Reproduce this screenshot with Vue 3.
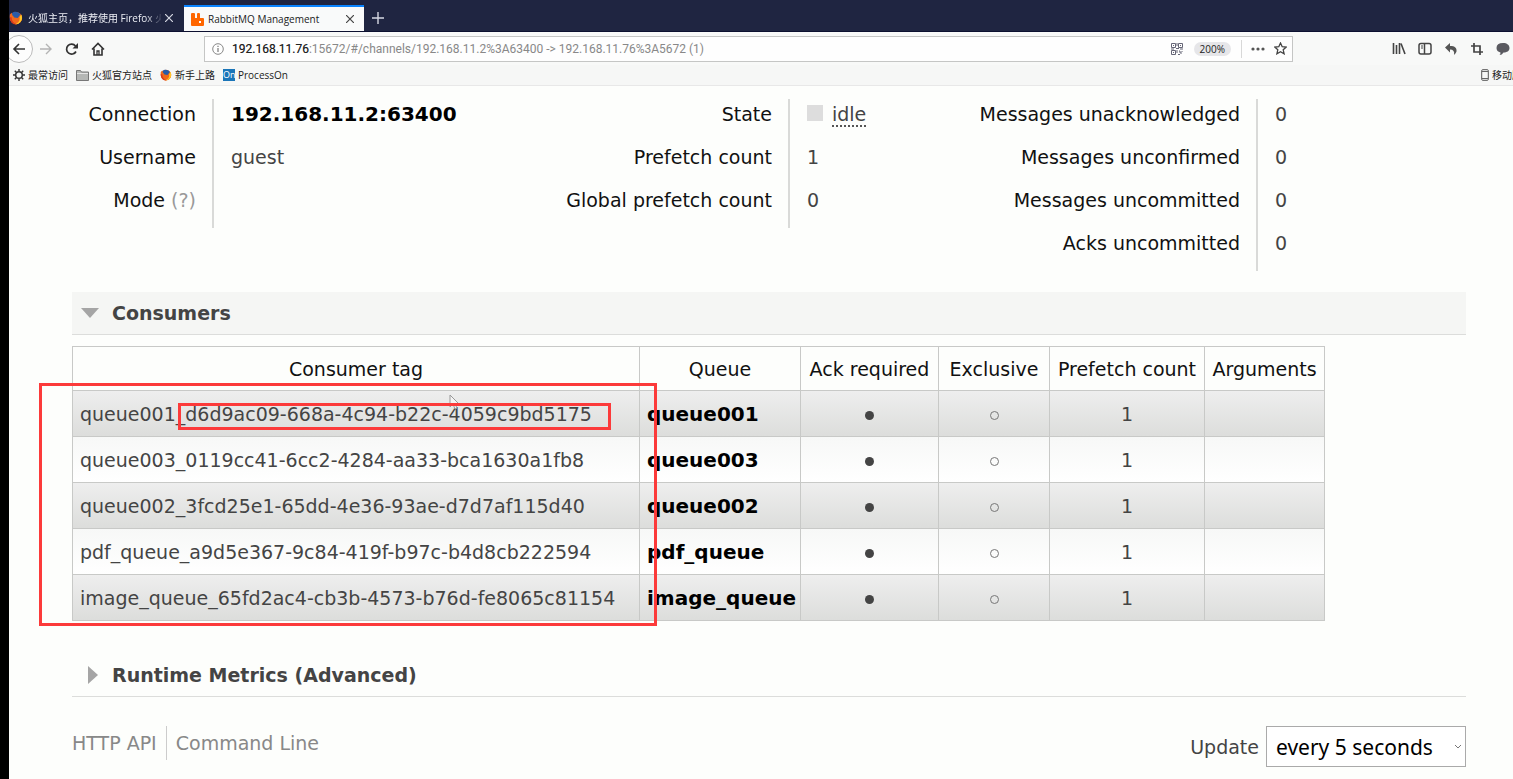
<script setup>
import { ref } from 'vue'

const address = ref('192.168.11.76:15672/#/channels/192.168.11.2%3A63400 -> 192.168.11.76%3A5672 (1)')
const interval = ref('every 5 seconds')

const consumers = [
  { tag: 'queue001_d6d9ac09-668a-4c94-b22c-4059c9bd5175', queue: 'queue001' },
  { tag: 'queue003_0119cc41-6cc2-4284-aa33-bca1630a1fb8', queue: 'queue003' },
  { tag: 'queue002_3fcd25e1-65dd-4e36-93ae-d7d7af115d40', queue: 'queue002' },
  { tag: 'pdf_queue_a9d5e367-9c84-419f-b97c-b4d8cb222594', queue: 'pdf_queue' },
  { tag: 'image_queue_65fd2ac4-cb3b-4573-b76d-fe8065c81154', queue: 'image_queue' },
]

const counters = ['Messages unacknowledged', 'Messages unconfirmed', 'Messages uncommitted', 'Acks uncommitted']
</script>

<template>
  <div class="window">
    <svg class="defs" aria-hidden="true">
      <symbol id="fox" viewBox="0 0 16 16">
        <circle cx="8" cy="8" r="7" fill="#f0681c" />
        <path d="M3 3C5 0 11 0 13 4L10 8 4 7z" fill="#2a5ca8" />
        <path d="M1 4C0 12 5 16 9 15 14 14 16 9 14 4 14 8 12 11 8 11 5 11 4 9 6 7L4 5 3 2z" fill="#f26a1b" />
        <path d="M14 4C17 10 12 16 7 15 11 14 13 11 12 7z" fill="#ffc928" />
        <path d="M1 7C1 13 5 16 9 15 5 14 3 11 3 7z" fill="#d93a1c" />
      </symbol>
    </svg>

    <header class="chrome">
      <div class="tabs">
        <div class="tab">
          <svg class="i14"><use href="#fox" /></svg>
          <span class="tab-title fade">火狐主页，推荐使用 Firefox 火</span>
          <button class="plain" aria-label="Close first tab">
            <svg width="8" height="8" viewBox="0 0 8 8"><path d="M0 0 8 8M8 0 0 8" stroke="#d5d8e2" stroke-width="1.2" /></svg>
          </button>
        </div>
        <div class="tab active">
          <svg width="13" height="13" viewBox="0 0 13 13"><path fill="#f60" d="M1 0h2q1 0 1 1v4h2V1q0-1 1-1h1q1 0 1 1v4h3q1 0 1 1v6q0 1-1 1H1q-1 0-1-1V1q0-1 1-1z" /><rect x="8" y="8" width="2" height="2" fill="#fff" /></svg>
          <span class="tab-title">RabbitMQ Management</span>
          <button class="plain" aria-label="Close RabbitMQ tab">
            <svg width="8" height="8" viewBox="0 0 8 8"><path d="M0 0 8 8M8 0 0 8" stroke="#444" stroke-width="1.2" /></svg>
          </button>
        </div>
        <button class="plain new-tab" aria-label="New tab">
          <svg width="12" height="12" viewBox="0 0 12 12"><path d="M6 0v12M0 6h12" stroke="#d5d8e2" stroke-width="1.4" /></svg>
        </button>
      </div>

      <div class="nav">
        <div class="nav-buttons">
          <button class="plain back" aria-label="Back">
            <svg width="14" height="14" viewBox="0 0 14 14" fill="none" stroke="#333" stroke-width="1.6"><path d="M13 7H2M7 2 2 7l5 5" /></svg>
          </button>
          <button class="plain" aria-label="Forward">
            <svg width="14" height="14" viewBox="0 0 14 14" fill="none" stroke="#b4b4b4" stroke-width="1.4"><path d="M1 7h11M7 2l5 5-5 5" /></svg>
          </button>
          <button class="plain" aria-label="Reload">
            <svg width="14" height="14" viewBox="0 0 14 14" fill="none" stroke="#333" stroke-width="1.7"><path d="M11 9.500A5 5 0 1 1 10.500 4" /><path d="M13 1v5.500H7.500z" fill="#333" stroke="none" /></svg>
          </button>
          <button class="plain" aria-label="Home">
            <svg width="14" height="14" viewBox="0 0 14 14" fill="none" stroke="#333" stroke-width="1.6"><path d="M1 7.500 7 1.500l6 6M3 6.500V13h8V6.500" /><path d="M6 13V9h2v4" stroke-width="1.300" /></svg>
          </button>
        </div>

        <div class="urlbar">
          <svg width="12" height="12" viewBox="0 0 12 12"><circle cx="6" cy="6" r="5.300" fill="none" stroke="#888" /><path d="M6 5v4M6 2.800v1.200" stroke="#777" stroke-width="1.200" /></svg>
          <div class="url-field">
            <input v-model="address" class="url" aria-label="Address" />
            <span class="host" aria-hidden="true">192.168.11.76</span>
          </div>
          <svg width="12" height="12" viewBox="0 0 12 12" fill="none" stroke="#667"><path d="M.5 .5h4v4h-4zM7.500 .5h4v4h-4zM.5 7.500h4v4h-4zM2 2.500h1M9 2.500h1M2 9.500h1M6 0v3M5 5.500h3M0 6h3M9 6h3M6 7v3M8 8h1v2h2M7 11.500h2M11 8v1" /></svg>
          <button class="plain zoom">200%</button>
          <span class="sep"></span>
          <svg width="14" height="4" viewBox="0 0 14 4" fill="#555"><circle cx="2" cy="2" r="1.600" /><circle cx="7" cy="2" r="1.600" /><circle cx="12" cy="2" r="1.600" /></svg>
          <svg width="13" height="13" viewBox="0 0 13 13"><path d="m6.500 1 1.700 3.700 4 .4-3 2.700.9 4-3.600-2.100L2.900 11.800l.9-4-3-2.700 4-.4z" fill="none" stroke="#444" stroke-width="1.300" /></svg>
        </div>

        <div class="tools">
          <svg width="14" height="14" viewBox="0 0 14 14" stroke="#444" stroke-width="1.600"><path d="M1.500 1v11M4.500 3v9M7.500 1v11M9 1.500l4 10.500" /></svg>
          <svg width="14" height="14" viewBox="0 0 14 14" fill="none" stroke="#444" stroke-width="1.500"><rect x="1" y="1.500" width="12" height="10.500" rx="2" /><path d="M6.500 2v10" /><path d="M3 4h2M3 6h2" stroke-width="1" /></svg>
          <svg width="14" height="14" viewBox="0 0 14 14"><path d="M1 5.500 6 1v3c5 0 7 2 6.500 5.500Q12 11 10 13 11 7.500 6 7.500v3z" fill="#555" /></svg>
          <svg width="14" height="14" viewBox="0 0 14 14" fill="none" stroke="#444" stroke-width="1.700"><path d="M4 1v9h9M1 4h9v9" /></svg>
          <svg width="14" height="14" viewBox="0 0 14 14"><path d="M7 1c4 0 6.500 2 6.500 5S11 10.500 7.500 10.500Q6 13 3.500 13 4.500 12 4.500 10.500 .5 9.500 .5 6 .5 1 7 1z" fill="#5a5a60" /></svg>
        </div>
      </div>

      <div class="bookmarks">
        <a href="#"><svg width="12" height="12" viewBox="0 0 12 12" fill="none" stroke="#333"><circle cx="6" cy="6" r="3.300" stroke-width="1.500" /><path d="M6 0v2M6 10v2M0 6h2M10 6h2M1.800 1.800l1.400 1.400M8.800 8.800l1.400 1.400M10.200 1.800 8.800 3.200M3.200 8.800l-1.400 1.400" stroke-width="1.400" /></svg>最常访问</a>
        <a href="#"><svg width="13" height="12" viewBox="0 0 13 12"><path d="M.5 1.500h4l1 1.500h7v8.500H.5z" fill="#b5b7b5" stroke="#777" /><path d="M1 4.500h11" stroke="#e4e4e4" /></svg>火狐官方站点</a>
        <a href="#"><svg class="i12"><use href="#fox" /></svg>新手上路</a>
        <a href="#"><span class="on">On</span>ProcessOn</a>
        <a href="#" class="mobile"><svg width="8" height="12" viewBox="0 0 8 12"><rect x=".7" y=".7" width="6.600" height="10.600" rx="1" fill="none" stroke="#555" /><path d="M1 2.500h6M1 9.500h6" stroke="#666" /></svg>移动版</a>
      </div>
    </header>

    <main>
      <section class="facts">
        <table class="first">
          <tbody>
            <tr><th scope="row">Connection</th><td><a href="#">192.168.11.2:63400</a></td></tr>
            <tr><th scope="row">Username</th><td>guest</td></tr>
            <tr><th scope="row">Mode <span class="help">(?)</span></th><td></td></tr>
          </tbody>
        </table>
        <table class="second">
          <tbody>
            <tr><th scope="row">State</th><td><span class="status"></span><span class="idle">idle</span></td></tr>
            <tr><th scope="row">Prefetch count</th><td>1</td></tr>
            <tr><th scope="row">Global prefetch count</th><td>0</td></tr>
          </tbody>
        </table>
        <table class="third">
          <tbody>
            <tr v-for="c in counters" :key="c"><th scope="row">{{ c }}</th><td>0</td></tr>
          </tbody>
        </table>
      </section>

      <h2 class="open">
        <button class="plain"><svg width="18" height="18" viewBox="0 0 18 18"><path d="M0 4h18l-9 10z" fill="#a5a5a5" /></svg>Consumers</button>
      </h2>

      <div class="consumers">
        <table class="list">
          <colgroup><col class="c-tag" /><col class="c-queue" /><col class="c-ack" /><col class="c-excl" /><col class="c-pref" /><col class="c-args" /></colgroup>
          <thead>
            <tr><th>Consumer tag</th><th>Queue</th><th>Ack required</th><th>Exclusive</th><th>Prefetch count</th><th>Arguments</th></tr>
          </thead>
          <tbody>
            <tr v-for="c in consumers" :key="c.tag">
              <td>{{ c.tag }}</td>
              <td><a href="#">{{ c.queue }}</a></td>
              <td class="mid"><span class="dot"></span></td>
              <td class="mid"><span class="ring"></span></td>
              <td class="mid">1</td>
              <td></td>
            </tr>
          </tbody>
        </table>
        <svg class="pointer" width="12" height="16" viewBox="0 0 12 16"><path d="M1 1v12l3-3 2 5 2-1-2-4h4z" fill="#f4f4f4" stroke="#999" /></svg>
        <div class="mark all"></div>
        <div class="mark id"></div>
      </div>

      <h2>
        <button class="plain"><svg width="18" height="18" viewBox="0 0 18 18"><path d="M7 0v18l10-9z" fill="#a5a5a5" /></svg>Runtime Metrics (Advanced)</button>
      </h2>

      <footer>
        <nav class="links"><a href="#">HTTP API</a><a href="#">Command Line</a></nav>
        <div class="update">
          <label for="interval">Update</label>
          <div class="select">
            <select id="interval" v-model="interval">
              <option>every 5 seconds</option>
              <option>every 30 seconds</option>
            </select>
            <svg width="6" height="4" viewBox="0 0 6 4"><path d="m0 0 3 3 3-3" fill="none" stroke="#777" /></svg>
          </div>
        </div>
      </footer>
    </main>
  </div>
</template>

<style>
body { margin: 0; background: #fdfefc; }
</style>

<style scoped>
* { box-sizing: border-box; }
.window {
  min-height: 100vh;
  border-left: 9px solid #000;
  background: #fdfefc;
  color: #444;
  font: 19px/24px "DejaVu Sans", Verdana, sans-serif;
  overflow: hidden;
}
.defs { display: none; }
a { color: inherit; text-decoration: none; }
svg { flex: none; display: block; }
.plain { border: 0; background: none; padding: 0; margin: 0; font: inherit; color: inherit; display: flex; align-items: center; }
.i14 { width: 14px; height: 14px; }
.i12 { width: 12px; height: 12px; }

.chrome { font: 10px/16px "Open Sans", "Noto Sans CJK SC", sans-serif; color: #222; }
.tabs { display: flex; align-items: flex-end; height: 32px; background: #1f2541; border-bottom: 1px solid #0c1030; }
.tab { display: flex; align-items: center; gap: 4px; width: 175px; height: 26px; padding: 0 11px 0 0; color: #eceef4; }
.tab-title { flex: 1; white-space: nowrap; overflow: hidden; }
.fade { padding-left: 1px; mask-image: linear-gradient(90deg, #000 88%, transparent 102%); }
.active { width: 180px; padding: 0 10px 0 7px; background: #f9fafa; color: #222; border-top: 2px solid #0a84ff; }
.new-tab { height: 26px; padding-left: 8px; }

.nav { display: flex; align-items: center; height: 33px; background: #f8f9f8; }
.nav-buttons { display: flex; align-items: center; gap: 12px; width: 195px; margin-left: -4px; }
.back { justify-content: center; width: 28px; height: 28px; border: 1px solid #bbb; border-radius: 50%; margin-right: -6px; background: #fdfdfd; }
.urlbar { flex: 1; display: flex; align-items: center; height: 26px; margin-left: 4px; padding: 0 5px 0 7px; border: 1px solid #c5c6c5; background: #fefefe; }
.url-field { position: relative; flex: 1; margin-left: 8px; font: 12px/20px Roboto, "Open Sans", sans-serif; }
.url { display: block; width: 100%; border: 0; padding: 0; background: none; font: inherit; color: #888; outline: 0; }
.host { position: absolute; left: 0; top: 0; color: #222; }
.zoom { height: 14px; margin-left: 11px; padding: 0 6px; border-radius: 7px; background: #e6e6e9; }
.sep { width: 1px; height: 18px; margin: 0 9px 0 10px; background: #d8d8d8; }
.urlbar svg:last-child { margin-left: 9px; }
.tools { display: flex; gap: 12px; margin-left: 99px; margin-right: 3px; }
.bookmarks { display: flex; align-items: center; gap: 8px; height: 21px; padding-left: 4px; background: #f6f7f6; border-bottom: 1px solid #e8e8e8; white-space: nowrap; }
.bookmarks a { display: flex; align-items: center; gap: 3px; }
.mobile { width: 32px; margin-left: auto; overflow: hidden; }
.on { width: 12px; height: 12px; background: #1a75b8; color: #fff; font: 9px/12px "Open Sans", sans-serif; text-align: center; }

main { padding: 13px 47px 0 63px; }
.facts { display: flex; align-items: flex-start; }
.facts table { flex: none; table-layout: fixed; border-collapse: separate; border-spacing: 0; }
.facts th { height: 43px; padding: 0 16px 14px 0; border-right: 2px solid #d9dad8; font-weight: 400; color: #111; text-align: right; white-space: nowrap; }
.facts td { padding: 0 0 14px 17px; white-space: nowrap; }
.first { width: 380px; }
.first th { width: 142px; }
.second { width: 414px; }
.second th { width: 338px; }
.third { width: 430px; }
.third th { width: 392px; }
.facts a, .list a { color: #000; font-size: 20px; font-weight: 700; }
.help { color: #999; }
.status { display: inline-block; width: 16px; height: 16px; margin-right: 9px; background: #ddd; }
.idle { border-bottom: 2px dotted #555; }

h2 { margin: 0; border-bottom: 1px solid #dcdddb; font-size: 19px; line-height: 24px; }
h2 .plain { gap: 13px; width: 100%; height: 42px; padding-left: 9px; }
h2.open { margin-top: 21px; background: #f5f6f4; }

.consumers { position: relative; width: 1253px; margin: 11px 0 33px; }
.list { table-layout: fixed; width: 100%; border-collapse: collapse; }
.list th, .list td { border: 1px solid #c8c9c7; padding: 0 7px; white-space: nowrap; }
.list th { height: 44px; padding: 0; font-weight: 400; color: #111; text-align: center; }
.list td { height: 46px; }
.list tbody tr { background: linear-gradient(#f7f8f7, #fff); }
.list tbody tr:nth-child(odd) { background: linear-gradient(#eee, #dcdddb); }
.list .mid { text-align: center; }
.c-tag { width: 567px; }
.c-queue { width: 161px; }
.c-ack { width: 138px; }
.c-excl { width: 111px; }
.c-pref { width: 155px; }
.c-args { width: 120px; }
.dot, .ring { display: inline-block; width: 9px; height: 9px; border-radius: 50%; vertical-align: middle; }
.dot { background: #444; }
.ring { border: 1px solid #777; }
.pointer { position: absolute; left: 377px; top: 48px; }
.mark { position: absolute; border: 3px solid #fc3a3a; }
.all { left: -33px; top: 37px; width: 618px; height: 243px; }
.id { left: 106px; top: 57px; width: 433px; height: 27px; }

footer { display: flex; justify-content: space-between; align-items: flex-start; padding-top: 29px; }
.links { display: flex; color: #888; }
.links a { line-height: 34px; }
.links a + a { margin-left: 9px; padding-left: 9px; border-left: 1px solid #ccc; }
.update { display: flex; align-items: center; gap: 7px; }
.select { position: relative; display: flex; align-items: center; }
.select svg { position: absolute; right: 5px; }
select { appearance: none; width: 200px; height: 41px; border: 1px solid #aaa; border-radius: 0; padding: 0 9px; background: #fff; color: #000; font: 21px "Noto Sans", sans-serif; }
</style>
